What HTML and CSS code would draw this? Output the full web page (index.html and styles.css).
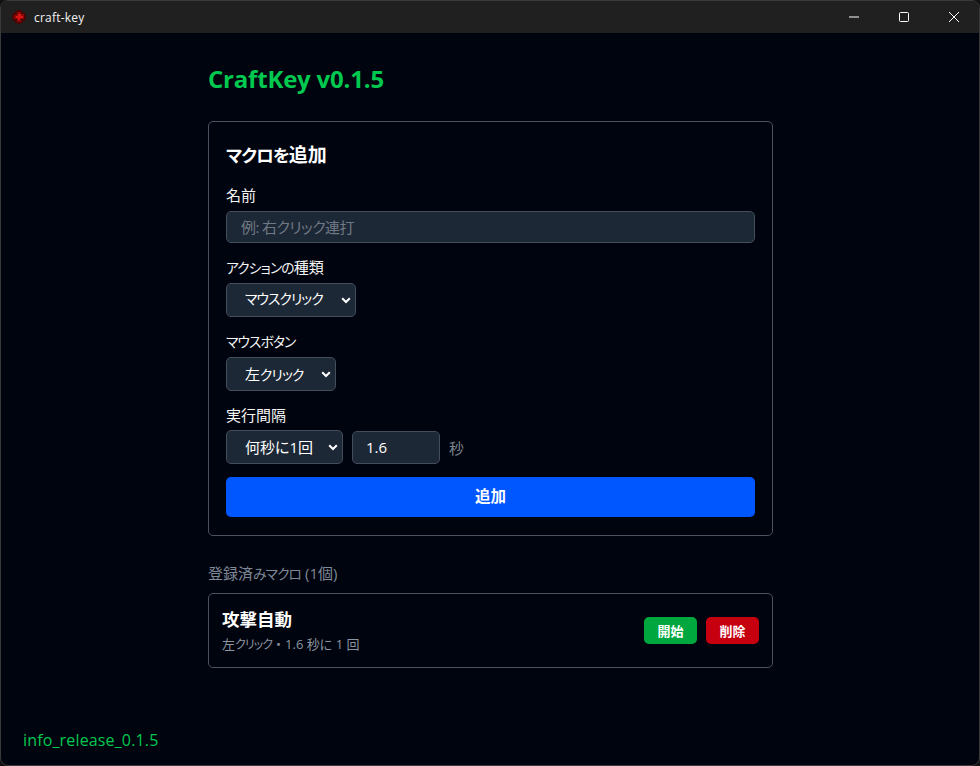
FILE: index.html
```html
<!DOCTYPE html>
<html lang="ja">
<head>
    <title>craft-key</title>
    <meta charset="utf-8">
    <link rel="stylesheet" href="styles.css">
</head>
<body>
    <div class="window">
        <div class="titlebar">
            <svg class="app-icon" width="14" height="14" viewBox="0 0 14 14">
                <path fill="#4a0404" d="M5 0h4v1h2v2h2v2h1v4h-1v2h-2v2H9v1H5v-1H3v-2H1V9H0V5h1V3h2V1h2z"/>
                <path fill="#8f0808" d="M5 2h4v2h3v5H9v3H5V9H2V5h3z"/>
                <path fill="#d81414" d="M6 4h3v2h2v2H8v2H6V8H4V6h2z"/>
            </svg>
            <span class="app-name">craft-key</span>
            <div class="window-controls">
                <span class="control">
                    <svg width="10" height="10" viewBox="0 0 10 10"><path d="M0 5h10" stroke="#fff" stroke-width="1"/></svg>
                </span>
                <span class="control">
                    <svg width="10" height="10" viewBox="0 0 10 10"><rect x="0.5" y="0.5" width="9" height="9" rx="1" fill="none" stroke="#fff"/></svg>
                </span>
                <span class="control">
                    <svg width="10" height="10" viewBox="0 0 10 10"><path d="M0 0l10 10M10 0L0 10" stroke="#fff" stroke-width="1"/></svg>
                </span>
            </div>
        </div>
        <main class="content">
            <h1 class="title">CraftKey v0.1.5</h1>
            <section class="card add-form">
                <h2 class="card-title"><span class="kana">マクロを</span>追加</h2>
                <div class="field">
                    <label class="label">名前</label>
                    <input class="input name-input" type="text" placeholder="例: 右クリック連打">
                </div>
                <div class="field">
                    <label class="label"><span class="kana">アクションの</span>種類</label>
                    <div class="select select-action">
                        <span class="kana">マウスクリック</span>
                        <svg class="chevron" width="10" height="7" viewBox="0 0 10 7"><path d="M1.2 1.2L5 5l3.8-3.8" fill="none" stroke="#fff" stroke-width="2"/></svg>
                    </div>
                </div>
                <div class="field">
                    <label class="label"><span class="kana">マウスボタン</span></label>
                    <div class="select select-button">
                        <span>左<span class="kana">クリック</span></span>
                        <svg class="chevron" width="10" height="7" viewBox="0 0 10 7"><path d="M1.2 1.2L5 5l3.8-3.8" fill="none" stroke="#fff" stroke-width="2"/></svg>
                    </div>
                </div>
                <div class="field">
                    <label class="label label-tight">実行間隔</label>
                    <div class="interval-row">
                        <div class="select select-interval">
                            <span>何秒に1回</span>
                            <svg class="chevron" width="10" height="7" viewBox="0 0 10 7"><path d="M1.2 1.2L5 5l3.8-3.8" fill="none" stroke="#fff" stroke-width="2"/></svg>
                        </div>
                        <input class="input interval-input" type="text" value="1.6">
                        <span class="unit">秒</span>
                    </div>
                </div>
                <button class="add-button">追加</button>
            </section>
            <h3 class="list-title">登録済<span class="kana">みマクロ</span> (1個)</h3>
            <section class="card macro-item">
                <div>
                    <div class="macro-name">攻撃自動</div>
                    <div class="macro-detail">左<span class="kana">クリック</span><span class="dot">・</span>1.6 秒に 1 回</div>
                </div>
                <div class="macro-actions">
                    <button class="small-button start-button">開始</button>
                    <button class="small-button delete-button">削除</button>
                </div>
            </section>
        </main>
        <div class="release-info">info_release_0.1.5</div>
    </div>
</body>
</html>
```

FILE: styles.css
```css
* {
    box-sizing: border-box;
}
html, body {
    height: 100%;
}
body {
    margin: 0;
    background: #111;
    overflow: hidden;
    font-family: "Open Sans", "Noto Sans CJK JP", sans-serif;
    font-feature-settings: "palt" 1;
    color: #fff;
}
.kana {
    font-size: 0.92em;
    line-height: 1;
    letter-spacing: -0.9px;
}
.window {
    position: relative;
    height: 766px;
    display: flex;
    flex-direction: column;
    background: #00040f;
    border: 1px solid #3a3a3a;
    border-radius: 8px;
    overflow: hidden;
}
.titlebar {
    flex: none;
    height: 32px;
    display: flex;
    align-items: center;
    background: #202020;
    padding-left: 11px;
}
.app-icon {
    margin-right: 8px;
}
.app-name {
    font-size: 12px;
    letter-spacing: 0.2px;
    color: #f2f2f2;
}
.window-controls {
    margin-left: auto;
    display: flex;
}
.control {
    width: 50px;
    height: 32px;
    display: flex;
    align-items: center;
    justify-content: center;
}
.content {
    width: 565px;
    margin: 0 auto;
    padding-top: 29px;
    position: relative;
    left: 0.5px;
}
.title {
    margin: 0 0 25px;
    font-size: 24px;
    line-height: 34px;
    font-weight: 700;
    letter-spacing: -0.2px;
    color: #00c950;
}
.card {
    border: 1px solid #4a5261;
    border-radius: 5px;
}
.add-form {
    height: 415px;
    padding: 19px 17px;
}
.card-title {
    margin: 0 0 17px;
    font-size: 19px;
    line-height: 28px;
    font-weight: 700;
}
.field + .field {
    margin-top: 15px;
}
.label {
    display: block;
    font-size: 15px;
    line-height: 18px;
    margin-bottom: 7px;
    color: #f5f5f5;
}
.label-tight {
    margin-bottom: 6px;
}
.input {
    display: block;
    height: 32px;
    padding: 0 14px;
    background: #1d2836;
    border: 1px solid #434d5c;
    border-radius: 5px;
    font-family: inherit;
    font-feature-settings: inherit;
    font-size: 15px;
    color: #fff;
    outline: none;
}
.input::placeholder {
    color: #6f7884;
}
.name-input {
    width: 529px;
    letter-spacing: -0.6px;
}
.select {
    position: relative;
    height: 34px;
    display: flex;
    align-items: center;
    padding: 0 0 2px 18px;
    background: #1d2836;
    border: 1px solid #434d5c;
    border-radius: 5px;
    font-size: 15px;
}
.chevron {
    position: absolute;
    right: 4px;
    top: 13px;
}
.select-action {
    width: 130px;
}
.select-button {
    width: 110px;
}
.select-interval {
    width: 117px;
}
.interval-row {
    display: flex;
    align-items: center;
    gap: 9px;
}
.interval-input {
    width: 88px;
    height: 33px;
    margin-top: 1px;
    padding: 0 13px 2px;
    letter-spacing: 0;
}
.unit {
    font-size: 15px;
    color: #7b8490;
}
.add-button {
    display: block;
    width: 529px;
    height: 40px;
    margin-top: 13px;
    padding: 0 0 3px;
    border: none;
    border-radius: 5px;
    background: #0056ff;
    color: #fff;
    font-family: inherit;
    font-size: 15.5px;
    font-weight: 700;
}
.list-title {
    margin: 26px 0 9px;
    font-size: 15px;
    line-height: 22px;
    font-weight: 400;
    color: #7f8895;
}
.macro-item {
    height: 75px;
    display: flex;
    align-items: center;
    justify-content: space-between;
    padding: 0 13px;
}
.macro-name {
    font-size: 17.5px;
    line-height: 24px;
    font-weight: 700;
}
.macro-detail {
    margin-top: 3px;
    font-size: 13px;
    line-height: 20px;
    color: #8d95a1;
}
.dot {
    font-feature-settings: normal;
    letter-spacing: 0;
}
.macro-actions {
    display: flex;
    gap: 9px;
}
.small-button {
    width: 53px;
    height: 27px;
    padding: 0;
    border: none;
    border-radius: 5px;
    color: #fff;
    font-family: inherit;
    font-size: 13px;
    font-weight: 700;
}
.start-button {
    background: #00a63e;
}
.delete-button {
    background: #c70010;
}
.release-info {
    position: absolute;
    left: 22px;
    bottom: 13px;
    font-size: 16px;
    line-height: 24px;
    letter-spacing: 0.15px;
    color: #00c950;
}
```
